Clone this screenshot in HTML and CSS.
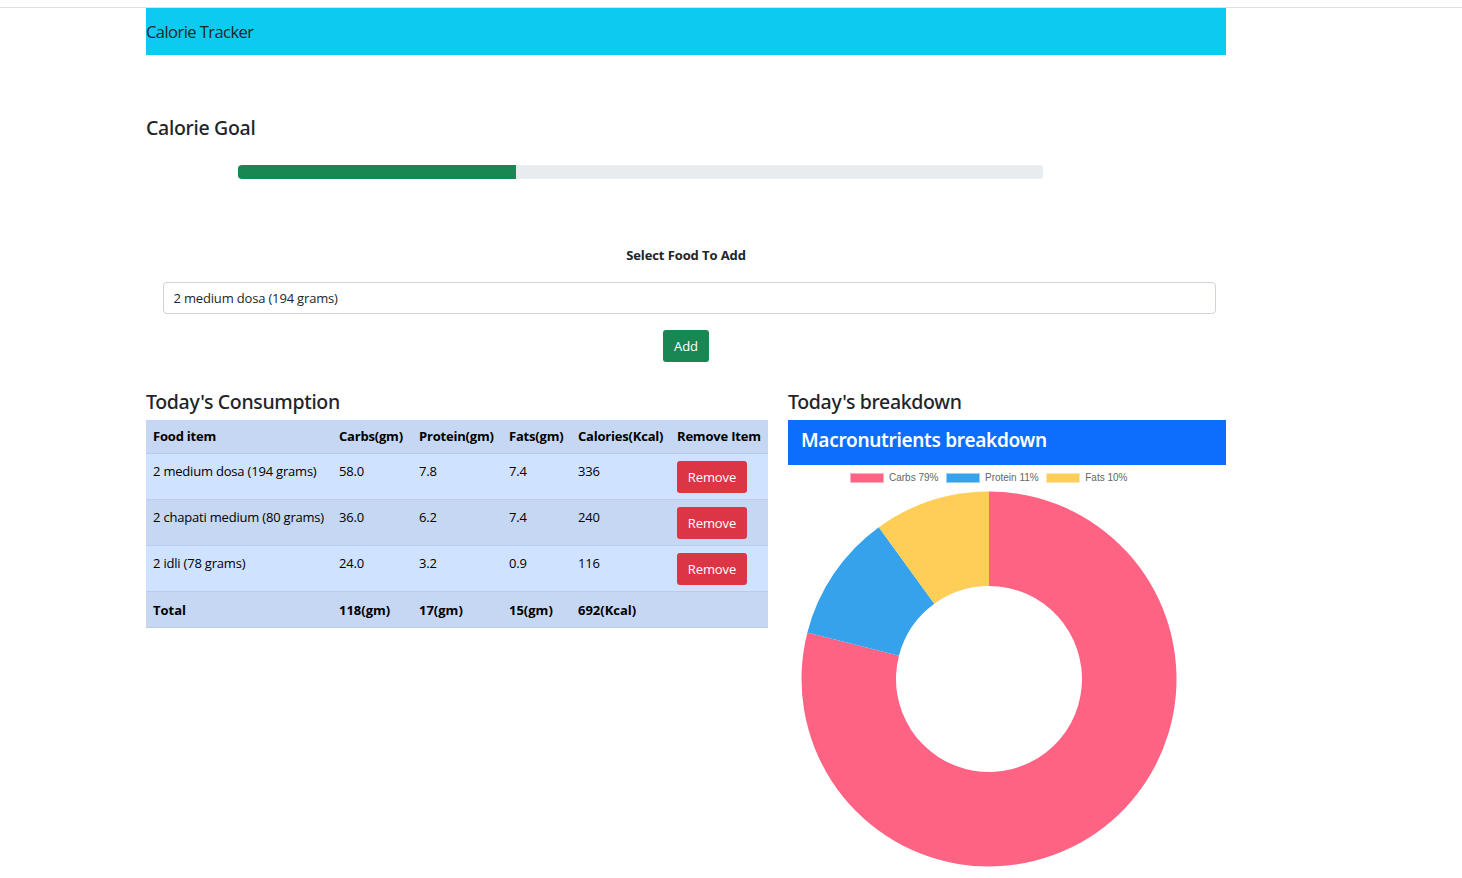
FILE: index.html
```html
<!doctype html>
<html>
<head>
	<meta charset="UTF-8">
	<title>Calorie Tracker</title>
	<link rel="stylesheet" href="styles.css">
</head>
<body>
	<div class="page">
		<nav class="navbar">Calorie Tracker</nav>
		<h2 class="goal-title">Calorie Goal</h2>
		<div class="progress">
			<div class="progress-bar" style="width: 34.5%"></div>
		</div>
		<form class="add-form">
			<label class="add-label" for="food">Select Food To Add</label>
			<select class="add-select" id="food">
				<option>2 medium dosa (194 grams)</option>
				<option>2 chapati medium (80 grams)</option>
				<option>2 idli (78 grams)</option>
			</select>
			<button type="button" class="btn btn-green">Add</button>
		</form>
		<div class="columns">
			<div>
				<h2 class="section-title">Today's Consumption</h2>
				<table class="food-table">
					<thead>
						<tr>
							<th class="col-food">Food item</th>
							<th class="col-carbs">Carbs(gm)</th>
							<th class="col-protein">Protein(gm)</th>
							<th class="col-fats">Fats(gm)</th>
							<th class="col-cals">Calories(Kcal)</th>
							<th>Remove Item</th>
						</tr>
					</thead>
					<tbody>
						<tr>
							<td>2 medium dosa (194 grams)</td>
							<td>58.0</td>
							<td>7.8</td>
							<td>7.4</td>
							<td>336</td>
							<td><button type="button" class="btn btn-red">Remove</button></td>
						</tr>
						<tr class="striped">
							<td>2 chapati medium (80 grams)</td>
							<td>36.0</td>
							<td>6.2</td>
							<td>7.4</td>
							<td>240</td>
							<td><button type="button" class="btn btn-red">Remove</button></td>
						</tr>
						<tr>
							<td>2 idli (78 grams)</td>
							<td>24.0</td>
							<td>3.2</td>
							<td>0.9</td>
							<td>116</td>
							<td><button type="button" class="btn btn-red">Remove</button></td>
						</tr>
					</tbody>
					<tfoot>
						<tr>
							<th>Total</th>
							<th>118(gm)</th>
							<th>17(gm)</th>
							<th>15(gm)</th>
							<th>692(Kcal)</th>
							<th></th>
						</tr>
					</tfoot>
				</table>
			</div>
			<div>
				<h2 class="section-title">Today's breakdown</h2>
				<div class="card-head">Macronutrients breakdown</div>
				<div class="legend">
					<span class="swatch swatch-carbs"></span><span class="legend-text">Carbs 79%</span>
					<span class="swatch swatch-protein"></span><span class="legend-text">Protein 11%</span>
					<span class="swatch swatch-fats"></span><span class="legend-text">Fats 10%</span>
				</div>
				<svg class="donut" width="376" height="376" viewBox="-188 -188 376 376">
					<path fill="#ff6384" d="M0 -187.5A187.5 187.5 0 1 1 -181.6 -46.6L-90.08 -23.13A93 93 0 1 0 0 -93Z"/>
					<path fill="#36a2eb" d="M-181.6 -46.6A187.5 187.5 0 0 1 -110.2 -151.7L-54.66 -75.24A93 93 0 0 0 -90.08 -23.13Z"/>
					<path fill="#ffce56" d="M-110.2 -151.7A187.5 187.5 0 0 1 0 -187.5L0 -93A93 93 0 0 0 -54.66 -75.24Z"/>
				</svg>
			</div>
		</div>
	</div>
</body>
</html>
```

FILE: styles.css
```css
* {
	margin: 0;
	padding: 0;
	box-sizing: border-box;
}
body {
	font-family: "Open Sans", "Noto Sans", sans-serif;
	font-size: 13px;
	letter-spacing: -0.2px;
	color: #212529;
	background-color: #fff;
	border-top: 1px solid #dee2e6;
	margin-top: 7px;
}
.page {
	width: 1080px;
	margin-left: 146px;
}
.navbar {
	height: 47px;
	line-height: 47px;
	background-color: #0dcaf0;
	font-size: 16.5px;
	letter-spacing: -0.55px;
}
.goal-title {
	margin-top: 60px;
	height: 26px;
	line-height: 26px;
	font-family: "Noto Sans", sans-serif;
	font-size: 19.5px;
	font-weight: 500;
	letter-spacing: -0.3px;
}
.progress {
	width: 805px;
	height: 14px;
	margin: 24px 0 0 92px;
	background-color: #e9ecef;
	border-radius: 4px;
	overflow: hidden;
}
.progress-bar {
	height: 100%;
	background-color: #198754;
}
.add-form {
	display: flex;
	flex-direction: column;
	align-items: center;
	margin-top: 67px;
}
.add-label {
	font-weight: 700;
	line-height: 18px;
	letter-spacing: -0.1px;
}
.add-select {
	-webkit-appearance: none;
	appearance: none;
	display: block;
	width: 1053px;
	height: 32px;
	margin: 18px 0 0 6px;
	padding: 0 10px;
	font: inherit;
	letter-spacing: -0.17px;
	color: #212529;
	background-color: #fff;
	border: 1px solid #ced4da;
	border-radius: 4px;
}
.btn {
	height: 32px;
	font: inherit;
	color: #fff;
	border: none;
	border-radius: 3px;
}
.btn-green {
	width: 46px;
	margin-top: 16px;
	background-color: #198754;
}
.btn-red {
	display: block;
	width: 70px;
	padding-top: 1px;
	letter-spacing: -0.1px;
	background-color: #dc3545;
}
.columns {
	display: grid;
	grid-template-columns: 622px 438px;
	gap: 20px;
	margin-top: 27px;
}
.section-title {
	height: 31px;
	line-height: 26px;
	font-family: "Noto Sans", sans-serif;
	font-size: 19.5px;
	font-weight: 500;
	letter-spacing: -0.33px;
}
.food-table {
	width: 622px;
	table-layout: fixed;
	border-collapse: separate;
	border-spacing: 0;
	background-color: #cfe2ff;
	color: #000;
}
.food-table th,
.food-table td {
	padding: 7px 7px 6px;
	text-align: left;
	vertical-align: top;
	border-bottom: 1px solid #b6cdf0;
	white-space: nowrap;
}
.food-table thead tr,
.food-table tfoot tr,
.food-table .striped {
	background-color: #c5d7f2;
}
.food-table thead th {
	height: 34px;
	line-height: 19px;
	letter-spacing: -0.2px;
}
.food-table td {
	height: 46px;
	line-height: 21px;
}
.food-table tfoot th {
	height: 35px;
	line-height: 22px;
	letter-spacing: 0;
}
.col-food { width: 186px; }
.col-carbs { width: 80px; }
.col-protein { width: 90px; }
.col-fats { width: 69px; }
.col-cals { width: 99px; }
.card-head {
	height: 45px;
	padding: 8px 13px;
	background-color: #0d6efd;
	color: #fff;
	font-family: "Noto Sans", sans-serif;
	font-size: 19px;
	font-weight: 600;
	line-height: 25px;
	letter-spacing: -0.3px;
}
.legend {
	display: flex;
	align-items: center;
	height: 25px;
	margin-bottom: 1px;
	padding-left: 62px;
	font-family: "Liberation Sans", Arial, sans-serif;
	font-size: 10px;
	letter-spacing: 0;
	color: #666;
}
.swatch {
	width: 34px;
	height: 10px;
	margin-right: 5px;
	border: 1px solid;
}
.legend-text {
	margin-right: 7.5px;
}
.swatch-carbs { background-color: #ff6384; border-color: #ffb1c1; }
.swatch-protein { background-color: #36a2eb; border-color: #9ad0f5; }
.swatch-fats { background-color: #ffce56; border-color: #ffe6aa; }
.donut {
	display: block;
	margin-left: 13px;
}
```
